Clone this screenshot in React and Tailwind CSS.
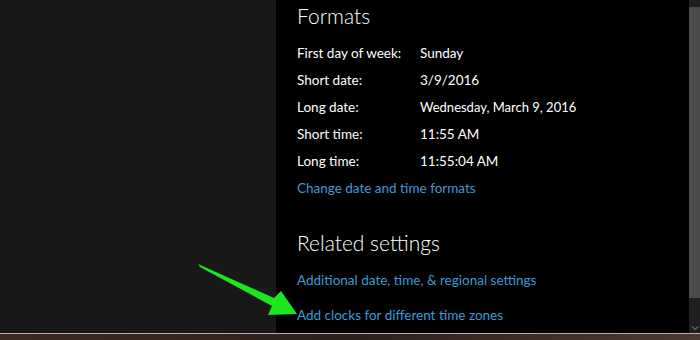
import React from "react";

const rows = [
  ["First day of week:", "Sunday"],
  ["Short date:", "3/9/2016"],
  ["Long date:", "Wednesday, March 9, 2016"],
  ["Short time:", "11:55 AM"],
  ["Long time:", "11:55:04 AM"],
];

const Arrow = () => (
  <svg
    className="absolute left-0 top-0 pointer-events-none"
    width="700"
    height="340"
    viewBox="0 0 700 340"
  >
    <polygon
      points="198,264 274,298 281,291 297,314 268,315 272,306 200,267"
      fill="#1ee61e"
    />
  </svg>
);

export default function App() {
  return (
    <div
      className="relative w-[700px] h-[340px] overflow-hidden flex flex-col bg-[#2a1d18]"
      style={{ fontFamily: '"Segoe UI", Lato, "Noto Sans", sans-serif' }}
    >
      <div className="flex h-[333px]">
        <div className="w-[276px] bg-[#181818]" />
        <div className="flex-1 bg-black pl-[21px] text-white">
          <h2 className="text-[21px] font-light leading-[28px] mt-[2px]">Formats</h2>
          <div className="mt-[10px]">
            {rows.map(([label, value]) => (
              <div key={label} className="flex items-center h-[27px] text-[13.5px]">
                <span className="w-[123px]">{label}</span>
                <span className={label === "Long date:" ? "text-[13px]" : ""}>{value}</span>
              </div>
            ))}
            <div className="flex items-center h-[27px] text-[13.5px] text-[#3c9ad8]">
              Change date and time formats
            </div>
          </div>
          <h2 className="text-[21px] font-light leading-[28px] mt-[27px]">Related settings</h2>
          <div className="mt-[10px] flex flex-col gap-[8px]">
            <div className="flex items-center h-[27px] text-[13.5px] text-[#3c9ad8]">
              Additional date, time, &amp; regional settings
            </div>
            <div className="flex items-center h-[27px] text-[13.5px] text-[#3c9ad8]">
              Add clocks for different time zones
            </div>
          </div>
        </div>
        <div className="w-[11px] bg-[#1f1f1f] flex flex-col">
          <div className="h-[7px]" />
          <div className="h-[291px] bg-[#4b4b4b]" />
          <div className="flex-1 flex items-end justify-center pb-[2px]">
            <svg width="8" height="6" viewBox="0 0 8 6">
              <path d="M1 1.5 L4 4.5 L7 1.5" stroke="#9a9a9a" strokeWidth="1" fill="none" />
            </svg>
          </div>
        </div>
      </div>
      <div className="h-[1px] bg-[#b5b0ad]" />
      <div className="flex-1 bg-gradient-to-r from-[#3a2a22] via-[#2e201b] to-[#4a3a33]" />
      <Arrow />
    </div>
  );
}
